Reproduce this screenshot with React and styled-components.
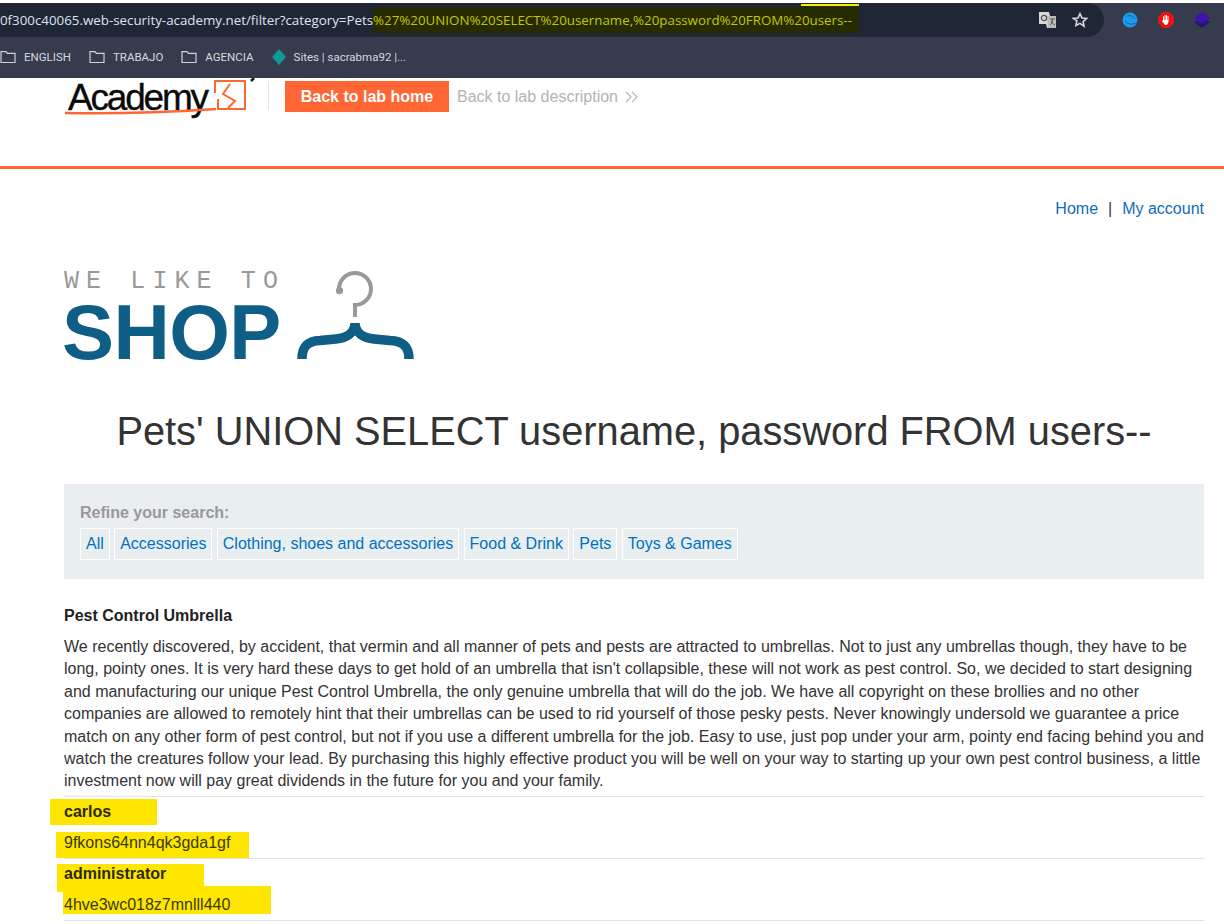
import React from "react";
import styled, { createGlobalStyle } from "styled-components";

const Global = createGlobalStyle`
  html, body { margin: 0; padding: 0; background: #fff; }
  body { font-family: "Liberation Sans", Arial, sans-serif; color: #333; font-size: 16px; overflow: hidden; }
  * { box-sizing: border-box; }
`;
const Page = styled.div`width: 1224px; height: 924px; overflow: hidden; background: #fff; position: relative;`;
const Chrome = styled.div`background: #fff; padding-top: 3px;`;
const UrlRow = styled.div`height: 34px; background: #363c4e; display: flex; align-items: center; padding-right: 12px;`;
const Omnibox = styled.div`width: 1104px; height: 34px; background: #1f2737; border-radius: 0 17px 17px 0; display: flex; align-items: center; justify-content: space-between; padding-right: 16px;`;
const Url = styled.div`font: 13.33px "Open Sans", sans-serif; color: #dfe2e8; white-space: nowrap; display: flex; align-items: center; height: 100%;`;
const UrlMark = styled.span`background: #272b00; color: #c3c800; height: 26px; padding-right: 7px; display: flex; align-items: center; position: relative;
  &::after { content: ""; position: absolute; right: 0; top: -3px; height: 2px; width: 58px; background: #f4f000; }`;
const OmniIcons = styled.div`display: flex; align-items: center; gap: 15px;`;
const Ext = styled.div`display: flex; align-items: center; gap: 20px; margin-left: 18px;`;
const Bookmarks = styled.div`height: 41px; background: #363c4e; display: flex; align-items: center; gap: 18px; padding-bottom: 2px;`;
const Bookmark = styled.div`display: flex; align-items: center; gap: 8px; font: 11.5px Roboto, sans-serif; color: #d5d8df; white-space: nowrap;`;
const LabHeader = styled.header`height: 91px; border-bottom: 3px solid #ff6633; display: flex; align-items: flex-start; padding: 3px 0 0 64px; overflow: hidden;`;
const AcademyLogo = styled.div`width: 205px; height: 29px; position: relative; border-right: 1px solid #e4e4e4; margin-right: 16px;`;
const AcademyText = styled.div`font-size: 37px; color: #0a0a0a; letter-spacing: -2.2px; line-height: 34px; padding-left: 4px; -webkit-text-stroke: 0.35px #0a0a0a; white-space: nowrap;`;
const AcademyMark = styled.svg`position: absolute; left: -4px; top: 0; overflow: visible;`;
const LabButton = styled.div`background: #ff6633; color: #fff; font-weight: bold; font-size: 16px; width: 164px; height: 31px; display: flex; align-items: center; justify-content: center;`;
const LabLink = styled.div`color: #b3b3b3; font-size: 16px; height: 31px; display: flex; align-items: center; gap: 7px; margin-left: 8px;`;
const Container = styled.main`padding: 0 20px 0 64px;`;
const TopLinks = styled.nav`display: flex; justify-content: flex-end; gap: 10px; color: #333; padding-top: 30px; line-height: 20px;`;
const NavLink = styled.span`color: #0f6cb8;`;
const ShopLogo = styled.div`display: flex; align-items: flex-end; gap: 16px; margin-top: 51px; height: 90px;`;
const ShopWords = styled.div`display: flex; flex-direction: column; width: 216px;`;
const Tagline = styled.div`font: 25px "Liberation Mono", monospace; color: #999; letter-spacing: 7.1px; line-height: 22px; white-space: pre; margin-bottom: 11px;`;
const ShopWord = styled.div`font-weight: bold; font-size: 78px; color: #0f5e85; line-height: 56px; margin-left: -2px; letter-spacing: -0.6px;`;
const Title = styled.h1`font-weight: normal; font-size: 39.8px; color: #333; text-align: center; margin: 46px 0 0; line-height: 50px; white-space: nowrap;`;
const Filters = styled.section`background: #e9eef1; height: 95px; margin-top: 28px; padding: 20px 16px 0;`;
const FilterLabel = styled.div`font-weight: bold; color: #999; line-height: 18px;`;
const FilterList = styled.div`display: flex; gap: 4.4px; margin-top: 6px;`;
const Filter = styled.span`border: 1px solid #fff; color: #0071bc; height: 32px; padding: 0 5px; display: flex; align-items: center; white-space: nowrap;`;
const ProductTitle = styled.div`font-weight: bold; margin-top: 27px; line-height: 20px; color: #222;`;
const Description = styled.p`margin: 10px 0 0; line-height: 22.4px; color: #333; height: 160px;`;
const Row = styled.div`border-top: 1px solid #e3e3e3; height: 62px; position: relative; &:last-child { border-bottom: 1px solid #e3e3e3; height: 63px; }`;
const Marker = styled.div`position: absolute; background: #ffe600; left: ${p => p.$left}px; top: ${p => p.$top}px; width: ${p => p.$width}px; height: ${p => p.$height}px;`;
const Name = styled.div`position: relative; font-weight: bold; line-height: 20px; padding-top: 5px; color: #2b2b00;`;
const Secret = styled.div`position: relative; line-height: 20px; margin-top: 11px; color: #3a3a00;`;

const Folder = () => (
  <svg width="16" height="14" viewBox="0 0 16 14" fill="none" stroke="#cfd2da" strokeWidth="1.2"><path d="M1 12.5V1.6h5l1.4 1.7h7.6v9.2z" /></svg>
);

export default function App() {
  return (
    <Page>
      <Global />
      <Chrome>
        <UrlRow>
          <Omnibox>
            <Url>0f300c40065.web-security-academy.net/filter?category=Pets<UrlMark>%27%20UNION%20SELECT%20username,%20password%20FROM%20users--</UrlMark></Url>
            <OmniIcons>
              <svg width="18" height="18" viewBox="0 0 18 18"><path d="M0 1h10l1 4h6v12H8l-1-4H0z" fill="#d8d8d8" /><path d="M8 5h9v12H9z" fill="#bbb" /><circle cx="5" cy="7" r="2.6" fill="none" stroke="#555" strokeWidth="1.3" /><path d="M11 8h5M13.5 8c0 3-1 5-2.5 6M12 10c1 2 2 3 4 4" stroke="#555" fill="none" /></svg>
              <svg width="16" height="16" viewBox="0 0 24 24" fill="none" stroke="#d5d8df" strokeWidth="2.4"><path d="M12 2.6l2.9 6.3 6.9.8-5.1 4.7 1.4 6.8L12 17.1l-6.1 3.1 1.4-6.8L2.2 9.7l6.9-.8z" /></svg>
            </OmniIcons>
          </Omnibox>
          <Ext>
            <svg width="16" height="16" viewBox="0 0 16 16"><circle cx="8" cy="8" r="7.5" fill="#1c9bea" /><path d="M3 9c3 4 9 4 12 1M5 4c3-1 6 0 8 3" stroke="#0b5fa8" fill="none" /></svg>
            <svg width="16" height="16" viewBox="0 0 16 16"><path d="M5 0h6l5 5v6l-5 5H5l-5-5V5z" fill="#ee1111" /><path d="M5 8V4.5h1V8h.5V3h1v5H8V3h1v5h.5V4h1v6l-1.5 3H7L4 9z" fill="#fff" /></svg>
            <svg width="16" height="16" viewBox="0 0 16 16"><path d="M8 5l8 5-8 6-8-6z" fill="#1d1a70" /><path d="M8 0l8 6-8 6-8-6z" fill="#4212a8" /></svg>
          </Ext>
        </UrlRow>
        <Bookmarks>
          <Bookmark><Folder />ENGLISH</Bookmark>
          <Bookmark><Folder />TRABAJO</Bookmark>
          <Bookmark><Folder />AGENCIA</Bookmark>
          <Bookmark>
            <svg width="14" height="16" viewBox="0 0 14 16"><path d="M7 0l7 8-7 8-7-8z" fill="#109a96" /></svg>
            Sites | sacrabma92 |...
          </Bookmark>
        </Bookmarks>
      </Chrome>
      <LabHeader>
        <AcademyLogo>
          <AcademyText>Academy</AcademyText>
          <AcademyMark width="200" height="34" viewBox="0 0 200 34" fill="none" stroke="#ff6633" strokeWidth="2">
            <path d="M155 12V0H185V28H158V18" />
            <path d="M170 3L163 13L175 20L168 27" />
            <path d="M5 32C50 33 110 31 156 28" strokeWidth="2.4" />
            <path d="M194 -3L191 0" stroke="#111" strokeWidth="2.5" />
          </AcademyMark>
        </AcademyLogo>
        <LabButton>Back to lab home</LabButton>
        <LabLink>
          Back to lab description
          <svg width="14" height="12" viewBox="0 0 14 12" fill="none" stroke="#b3b3b3" strokeWidth="1.1"><path d="M1 1l5 5-5 5M7 1l5 5-5 5" /></svg>
        </LabLink>
      </LabHeader>
      <Container>
        <TopLinks><NavLink>Home</NavLink><span>|</span><NavLink>My account</NavLink></TopLinks>
        <ShopLogo>
          <ShopWords>
            <Tagline>WE LIKE TO</Tagline>
            <ShopWord>SHOP</ShopWord>
          </ShopWords>
          <svg width="120" height="90" viewBox="0 0 120 90" fill="none">
            <path d="M59 47V35A16 16 0 1 0 43 20" stroke="#999" strokeWidth="4" />
            <circle cx="43.5" cy="20.7" r="3.6" fill="#999" />
            <path d="M6 89C6 76 12 71 24 70.5L40 69C50 68 59 63 59 53C59 63 68 68 78 69L94 70.5C106 71 113 76 113 89" stroke="#0f5e85" strokeWidth="9.5" />
          </svg>
        </ShopLogo>
        <Title>Pets' UNION SELECT username, password FROM users--</Title>
        <Filters>
          <FilterLabel>Refine your search:</FilterLabel>
          <FilterList>
            <Filter>All</Filter>
            <Filter>Accessories</Filter>
            <Filter>Clothing, shoes and accessories</Filter>
            <Filter>Food &amp; Drink</Filter>
            <Filter>Pets</Filter>
            <Filter>Toys &amp; Games</Filter>
          </FilterList>
        </Filters>
        <ProductTitle>Pest Control Umbrella</ProductTitle>
        <Description>We recently discovered, by accident, that vermin and all manner of pets and pests are attracted to umbrellas. Not to just any umbrellas though, they have to be long, pointy ones. It is very hard these days to get hold of an umbrella that isn't collapsible, these will not work as pest control. So, we decided to start designing and manufacturing our unique Pest Control Umbrella, the only genuine umbrella that will do the job. We have all copyright on these brollies and no other companies are allowed to remotely hint that their umbrellas can be used to rid yourself of those pesky pests. Never knowingly undersold we guarantee a price match on any other form of pest control, but not if you use a different umbrella for the job. Easy to use, just pop under your arm, pointy end facing behind you and watch the creatures follow your lead. By purchasing this highly effective product you will be well on your way to starting up your own pest control business, a little investment now will pay great dividends in the future for you and your family.</Description>
        <Row>
          <Marker $left={-14} $top={2} $width={107} $height={26} />
          <Marker $left={-8} $top={35} $width={193} $height={26} />
          <Name>carlos</Name>
          <Secret>9fkons64nn4qk3gda1gf</Secret>
        </Row>
        <Row>
          <Marker $left={-7} $top={5} $width={147} $height={28} />
          <Marker $left={-1} $top={27} $width={208} $height={28} />
          <Name>administrator</Name>
          <Secret>4hve3wc018z7mnlll440</Secret>
        </Row>
      </Container>
    </Page>
  );
}
